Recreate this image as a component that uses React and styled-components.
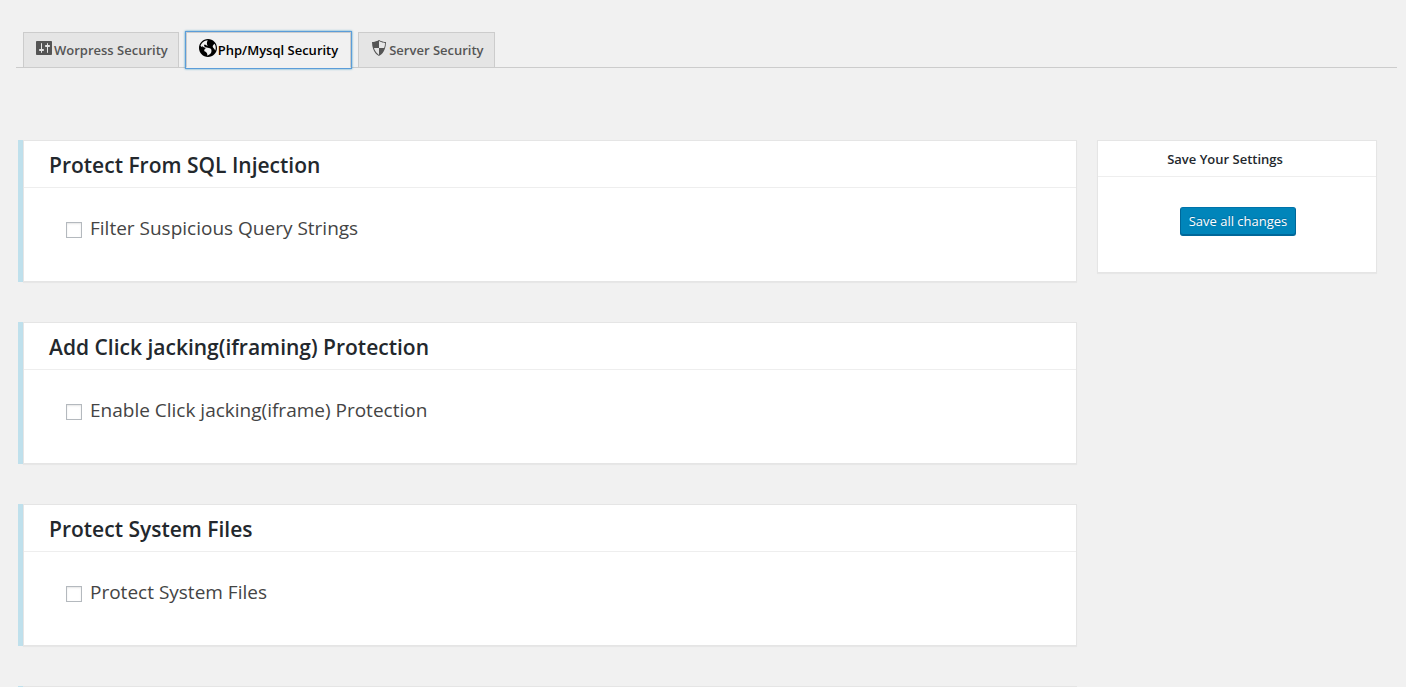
import React from "react";
import styled, { createGlobalStyle } from "styled-components";

const GlobalStyle = createGlobalStyle`
  *, *::before, *::after { box-sizing: border-box; }
  body {
    margin: 0;
    background: #f1f1f1;
    color: #444;
    font-family: "Segoe UI", "Open Sans", "Noto Sans", sans-serif;
    font-size: 13px;
  }
`;

const Page = styled.div`
  height: 100vh;
  overflow: hidden;
  padding: 32px 9px 0 16px;
`;

const TabBar = styled.nav`
  display: flex;
  gap: 7px;
  height: 36px;
  padding: 0 7px;
  border-bottom: 1px solid #ccc;
`;

const Tab = styled.a`
  display: flex;
  align-items: flex-start;
  height: ${(p) => (p.$active ? 36 : 35)}px;
  padding: ${(p) => (p.$active ? "5px 12px 5px 11px" : "5px 10px")};
  border: 1px solid #ccc;
  border-bottom: ${(p) => (p.$active ? "1px solid #f1f1f1" : "none")};
  background: ${(p) => (p.$active ? "#f1f1f1" : "#e5e5e5")};
  color: ${(p) => (p.$active ? "#000" : "#555")};
  box-shadow: ${(p) =>
    p.$active ? "0 0 0 1px #5b9dd9, 0 0 2px 1px rgba(30, 140, 190, 0.8)" : "none"};
  font-size: 13px;
  font-weight: 600;
  line-height: 24px;
  text-decoration: none;
  white-space: nowrap;
`;

const Icon = styled.svg`
  flex: none;
  width: 20px;
  height: 20px;
  fill: currentColor;
`;

const Columns = styled.div`
  display: flex;
  align-items: flex-start;
  gap: 20px;
  padding: 72px 20px 0 2px;
`;

const Main = styled.main`
  flex: 1;
  display: flex;
  flex-direction: column;
  gap: 40px;
`;

const Accent = styled.section`
  border-left: 5px solid #bfe0ec;
`;

const Box = styled.div`
  background: #fff;
  border: 1px solid #e5e5e5;
  box-shadow: 0 1px 1px rgba(0, 0, 0, 0.04);
`;

const CardTitle = styled.h2`
  margin: 0;
  padding: 9px 25px 6px;
  border-bottom: 1px solid #eee;
  color: #23282d;
  font-size: 21px;
  font-weight: 600;
  line-height: 31px;
`;

const CardBody = styled.div`
  height: 93px;
  padding: 24px 42px;
`;

const Option = styled.label`
  display: inline-flex;
  align-items: center;
  gap: 8px;
  font-size: 19px;
  line-height: 32px;
`;

const Checkbox = styled.input`
  appearance: none;
  width: 16px;
  height: 16px;
  margin: 4px 0 0;
  border: 1px solid #b4b9be;
  background: #fff;
  box-shadow: inset 0 1px 2px rgba(0, 0, 0, 0.1);
`;

const Side = styled.aside`
  flex: none;
  width: 280px;
`;

const SideTitle = styled.h3`
  margin: 0;
  padding: 6px 36px 5px 12px;
  border-bottom: 1px solid #eee;
  color: #23282d;
  font-size: 13px;
  font-weight: 600;
  line-height: 24px;
  text-align: center;
`;

const SideBody = styled.div`
  display: flex;
  justify-content: center;
  padding: 30px 0 36px 2px;
`;

const SaveButton = styled.button`
  height: 29px;
  padding: 0 8px 1px;
  border: 1px solid;
  border-color: #0073aa #006799 #006799;
  border-radius: 3px;
  background: #0085ba;
  box-shadow: inset 0 -1px 0 #006799;
  color: #fff;
  font-family: inherit;
  font-size: 13px;
  line-height: 26px;
  text-shadow: 0 -1px 1px #006799;
  white-space: nowrap;
`;

const tabs = [
  {
    label: "Worpress Security",
    viewBox: "0 0 20 20",
    path: "M18 16V4c0-.55-.45-1-1-1H3c-.55 0-1 .45-1 1v12c0 .55.45 1 1 1h14c.55 0 1-.45 1-1zM8 11h1c.55 0 1 .45 1 1s-.45 1-1 1H8v1.5c0 .28-.22.5-.5.5s-.5-.22-.5-.5V13H6c-.55 0-1-.45-1-1s.45-1 1-1h1V5.5c0-.28.22-.5.5-.5s.5.22.5.5V11zm5-2h-1c-.55 0-1-.45-1-1s.45-1 1-1h1V5.5c0-.28.22-.5.5-.5s.5.22.5.5V7h1c.55 0 1 .45 1 1s-.45 1-1 1h-1v5.5c0 .28-.22.5-.5.5s-.5-.22-.5-.5V9z",
  },
  {
    label: "Php/Mysql Security",
    active: true,
    viewBox: "-1 -1 20 20",
    path: "M9 0C4.03 0 0 4.03 0 9s4.03 9 9 9 9-4.03 9-9-4.03-9-9-9zm3.46 11.95c0 1.47-.8 3.3-4.06 4.7.3-4.17-2.52-3.69-3.2-5 .126-1.1.804-2.063 1.8-2.55-1.552-.266-3-.96-4.18-2 .05.47.28.904.64 1.21-.782-.295-1.458-.817-1.94-1.5.977-3.225 3.883-5.482 7.25-5.63-.84 1.38-1.5 4.13 0 5.57C7.23 7 6.26 5 5.41 5.79c-1.13 1.06.33 2.51 3.42 3.08 3.29.59 3.66 1.58 3.63 3.08zm1.34-4c-.32-1.11.62-2.23 1.69-3.14 1.356 1.955 1.67 4.45.84 6.68-.77-1.89-2.17-2.32-2.53-3.57v.03z",
  },
  {
    label: "Server Security",
    viewBox: "0 0 20 20",
    path: "M10 2s3 2 7 2c0 11-7 14-7 14S3 15 3 4c4 0 7-2 7-2zm0 8h5s1-1 1-5c0 0-5-1-6-2v7H5c1 4 5 7 5 7v-7z",
  },
];

const cards = [
  { title: "Protect From SQL Injection", option: "Filter Suspicious Query Strings" },
  { title: "Add Click jacking(iframing) Protection", option: "Enable Click jacking(iframe) Protection" },
  { title: "Protect System Files", option: "Protect System Files" },
];

export default function App() {
  return (
    <Page>
      <GlobalStyle />
      <TabBar>
        {tabs.map((t) => (
          <Tab key={t.label} href="#" $active={t.active}>
            <Icon viewBox={t.viewBox} aria-hidden="true">
              <path d={t.path} />
            </Icon>
            {t.label}
          </Tab>
        ))}
      </TabBar>
      <Columns>
        <Main>
          {cards.map((c) => (
            <Accent key={c.title}>
              <Box>
                <CardTitle>{c.title}</CardTitle>
                <CardBody>
                  <Option>
                    <Checkbox type="checkbox" />
                    {c.option}
                  </Option>
                </CardBody>
              </Box>
            </Accent>
          ))}
          <Accent>
            <Box>
              <CardBody />
            </Box>
          </Accent>
        </Main>
        <Side>
          <Box>
            <SideTitle>Save Your Settings</SideTitle>
            <SideBody>
              <SaveButton type="button">Save all changes</SaveButton>
            </SideBody>
          </Box>
        </Side>
      </Columns>
    </Page>
  );
}
